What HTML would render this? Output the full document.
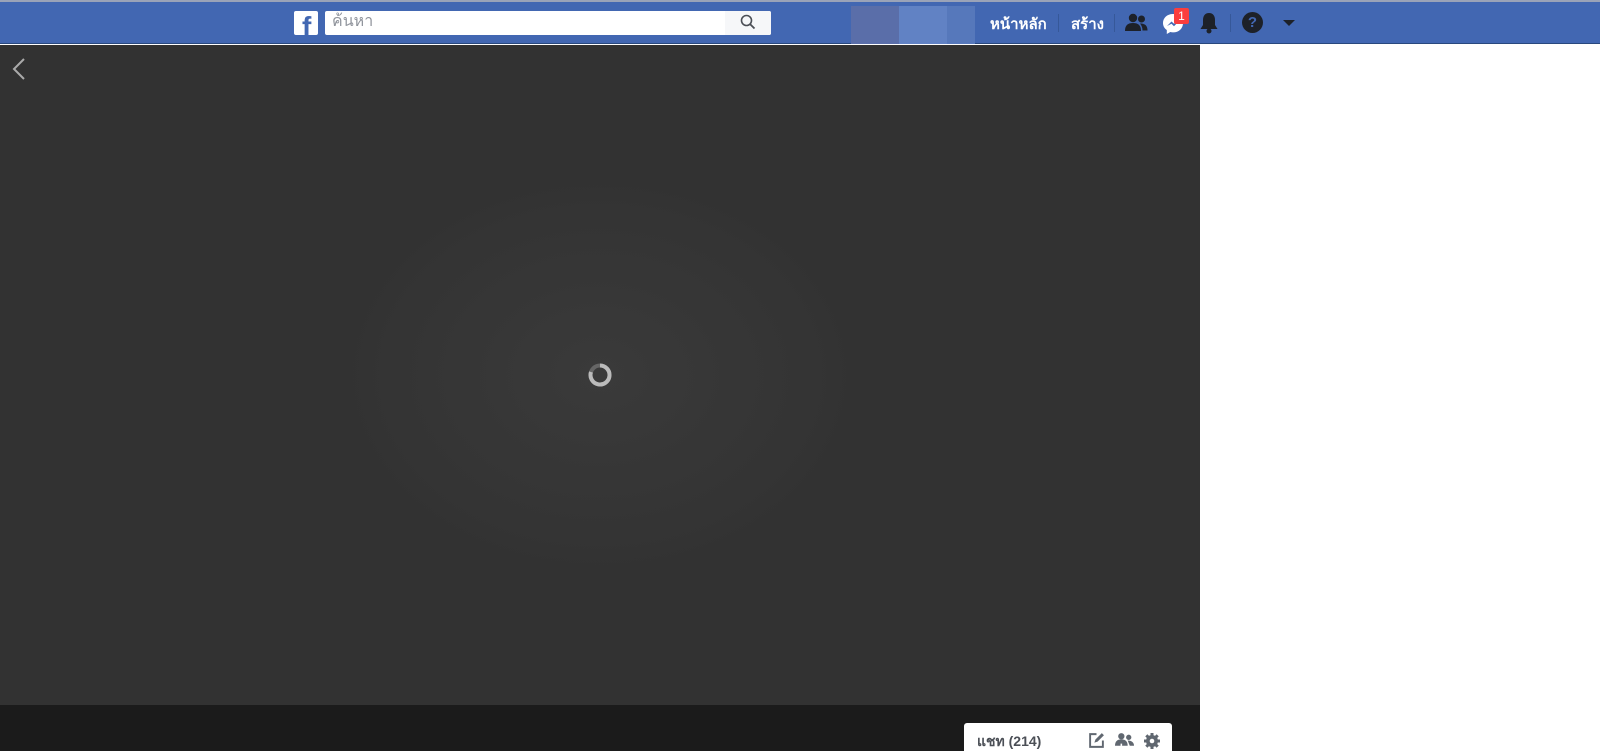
<!DOCTYPE html>
<html><head><meta charset="utf-8"><style>
*{margin:0;padding:0;box-sizing:border-box}
body{width:1600px;height:751px;overflow:hidden;background:#fff;font-family:"Liberation Sans","Noto Sans CJK SC",sans-serif;position:relative}
.top{position:absolute;left:0;top:0;width:1600px;height:2px;background:#9aa3b8}
.bar{position:absolute;left:0;top:2px;width:1600px;height:42px;background:#4267b2;border-bottom:1px solid #29487d}
.stage{position:absolute;left:0;top:45px;width:1200px;height:660px;background:radial-gradient(ellipse 260px 200px at 600px 330px,#3a3a3a,#343434 80%,#323232)}
.bot{position:absolute;left:0;top:705px;width:1200px;height:46px;background:#1b1b1b}
.txt{position:absolute;color:#fff;font-weight:bold;font-size:15px;top:12px}
.sep{position:absolute;top:14px;width:1px;height:18px;background:#365899}
</style></head><body>
<div class="top"></div>
<div class="bar"></div>
<div style="position:absolute;left:294px;top:11px;width:24px;height:24px;background:#fff;border-radius:2px;overflow:hidden">
<span style="position:absolute;left:8px;top:2px;font-size:28px;font-weight:bold;color:#4267b2;line-height:28px">f</span></div>
<div style="position:absolute;left:325px;top:11px;width:446px;height:24px;background:#fff;border-radius:2px"></div>
<div style="position:absolute;left:725px;top:11px;width:46px;height:24px;background:#f6f7f9;border-radius:0 2px 2px 0"></div>
<span style="position:absolute;left:332px;top:12px;font-size:16px;color:#90949c;line-height:20px">ค้นหา</span>
<svg style="position:absolute;left:740px;top:14px" width="16" height="16" viewBox="0 0 16 16"><circle cx="6.5" cy="6.5" r="5" fill="none" stroke="#4b4f56" stroke-width="1.6"/><path d="M10.2 10.2L14.5 14.5" stroke="#4b4f56" stroke-width="1.8"/></svg>
<div style="position:absolute;left:851px;top:6px;width:48px;height:38px;background:#5a6ea9"></div>
<div style="position:absolute;left:899px;top:6px;width:48px;height:38px;background:#6182c4"></div>
<div style="position:absolute;left:947px;top:6px;width:28px;height:38px;background:#5678bb"></div>
<span class="txt" style="left:990px">หน้าหลัก</span>
<div class="sep" style="left:1058px"></div>
<span class="txt" style="left:1071px">สร้าง</span>
<div class="sep" style="left:1114px"></div>
<svg style="position:absolute;left:1125px;top:13px" width="23" height="20" viewBox="0 0 23 20"><circle cx="8" cy="5" r="4.2" fill="#1d2129"/><path d="M0 18c0-6 3-8 8-8s8 2 8 8z" fill="#1d2129"/><circle cx="16.5" cy="6" r="3.5" fill="#1d2129"/><path d="M15 10.5c5 0 7.5 2 7.5 7h-5c0-3-1-5-2.5-7z" fill="#1d2129"/></svg>
<svg style="position:absolute;left:1161px;top:12px" width="24" height="24" viewBox="0 0 24 24"><path d="M12 2C6 2 2 6 2 11c0 3 1.5 5.5 3.8 7v4l3.5-2c.9.3 1.8.4 2.7.4 6 0 10-4 10-9.4S18 2 12 2z" fill="#fff"/><path d="M6 14l4.5-4.5 2.5 2.3 4.5-2.3-4.5 4.7-2.5-2.4z" fill="#4267b2"/></svg>
<div style="position:absolute;left:1174px;top:8px;width:15px;height:16px;background:#fa3e3e;border-radius:2px;color:#fff;font-size:12px;text-align:center;line-height:16px">1</div>
<svg style="position:absolute;left:1199px;top:12px" width="20" height="22" viewBox="0 0 20 22"><path d="M10 1c-4 0-6 3-6 7v5l-2.5 4h17L16 13V8c0-4-2-7-6-7z" fill="#1d2129"/><circle cx="10" cy="19" r="2.5" fill="#1d2129"/></svg>
<div class="sep" style="left:1230px"></div>
<div style="position:absolute;left:1242px;top:12px;width:21px;height:21px;border-radius:50%;background:#1d2129;color:#4267b2;font-weight:bold;font-size:15px;text-align:center;line-height:21px">?</div>
<div style="position:absolute;left:1283px;top:20px;width:0;height:0;border-left:6px solid transparent;border-right:6px solid transparent;border-top:6px solid #1d2129"></div>
<div class="stage"></div>
<svg style="position:absolute;left:10px;top:57px" width="20" height="24" viewBox="0 0 20 24"><path d="M14 2L4 12l10 10" fill="none" stroke="#aaa" stroke-width="2"/></svg>
<svg style="position:absolute;left:586px;top:361px" width="28" height="28" viewBox="0 0 28 28"><circle cx="14" cy="14" r="9.5" fill="none" stroke="#666" stroke-width="4"/><path d="M14 4.5A9.5 9.5 0 1 1 5 11" fill="none" stroke="#bbb" stroke-width="4"/></svg>
<div class="bot"></div>
<div style="position:absolute;left:964px;top:723px;width:208px;height:30px;background:#fff;border-radius:3px 3px 0 0"></div>
<span style="position:absolute;left:977px;top:731px;font-size:14px;font-weight:bold;color:#4b4f56">แชท (214)</span>
<svg style="position:absolute;left:1088px;top:732px" width="17" height="17" viewBox="0 0 16 16"><path d="M8 2H2v12h12V8" fill="none" stroke="#606770" stroke-width="1.8"/><path d="M6 10l1-3 6-6 2 2-6 6z" fill="#606770"/></svg>
<svg style="position:absolute;left:1115px;top:732px" width="19" height="18" viewBox="0 0 18 17"><circle cx="6" cy="4" r="3" fill="#606770"/><path d="M0 13c0-4 2-6 6-6s6 2 6 6z" fill="#606770"/><circle cx="13" cy="5" r="2.5" fill="#606770"/><path d="M12 8c4 0 6 2 6 5h-4z" fill="#606770"/><path d="M6 11v6M3 14h6" stroke="#fff" stroke-width="1.5"/></svg>
<svg style="position:absolute;left:1143px;top:732px" width="18" height="18" viewBox="0 0 18 18"><circle cx="9" cy="9" r="6" fill="#606770"/><g stroke="#606770" stroke-width="3"><path d="M9 1v16M1 9h16M3.3 3.3l11.4 11.4M14.7 3.3L3.3 14.7"/></g><circle cx="9" cy="9" r="2.3" fill="#fff"/></svg>
</body></html>
